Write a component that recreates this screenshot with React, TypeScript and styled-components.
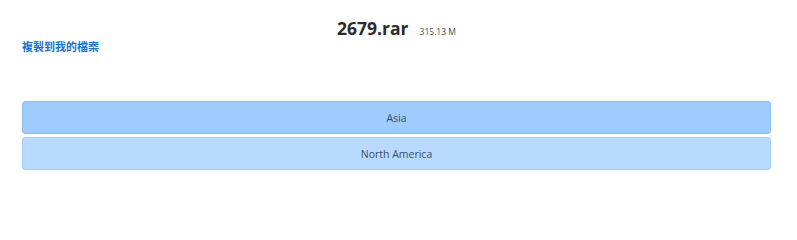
import React from "react";
import styled, { createGlobalStyle } from "styled-components";

const Global = createGlobalStyle`
  html, body { margin: 0; padding: 0; background: #fff; }
  body { font-family: "Open Sans", "Noto Sans", "Noto Sans CJK TC", sans-serif; }
`;

const Page = styled.div`
  padding: 17px 26px 0 22px;
`;

const TitleRow = styled.h1`
  margin: 0;
  display: flex;
  justify-content: center;
  align-items: baseline;
  gap: 11px;
  height: 22px;
  line-height: 22px;
`;

const FileName = styled.span`
  font-family: "Open Sans", sans-serif;
  font-weight: 700;
  font-size: 17.5px;
  color: #2b2b2b;
`;

const FileSize = styled.span`
  font-family: "Open Sans", sans-serif;
  font-weight: 400;
  font-size: 8.5px;
  color: #4a4a4a;
`;

const CopyLink = styled.a`
  display: block;
  width: fit-content;
  font-family: "Noto Sans CJK TC", sans-serif;
  font-weight: 700;
  font-size: 11px;
  line-height: 14px;
  color: #1a73d0;
  text-decoration: none;
  cursor: pointer;
`;

const List = styled.div`
  margin-top: 48px;
  display: flex;
  flex-direction: column;
  gap: 3px;
`;

const Item = styled.div<{ $active?: boolean }>`
  height: 31px;
  display: flex;
  align-items: center;
  justify-content: center;
  border: 1px solid ${(p) => (p.$active ? "#8dbdf2" : "#a6cdf5")};
  border-radius: 3px;
  background: ${(p) => (p.$active ? "#9fcbff" : "#b9daff")};
  font-family: "Open Sans", sans-serif;
  font-size: 10.5px;
  color: #3a4d68;
`;

export default function App() {
  return (
    <>
      <Global />
      <Page>
        <TitleRow>
          <FileName>2679.rar</FileName>
          <FileSize>315.13 M</FileSize>
        </TitleRow>
        <CopyLink>複製到我的檔案</CopyLink>
        <List>
          <Item $active>Asia</Item>
          <Item>North America</Item>
        </List>
      </Page>
    </>
  );
}
